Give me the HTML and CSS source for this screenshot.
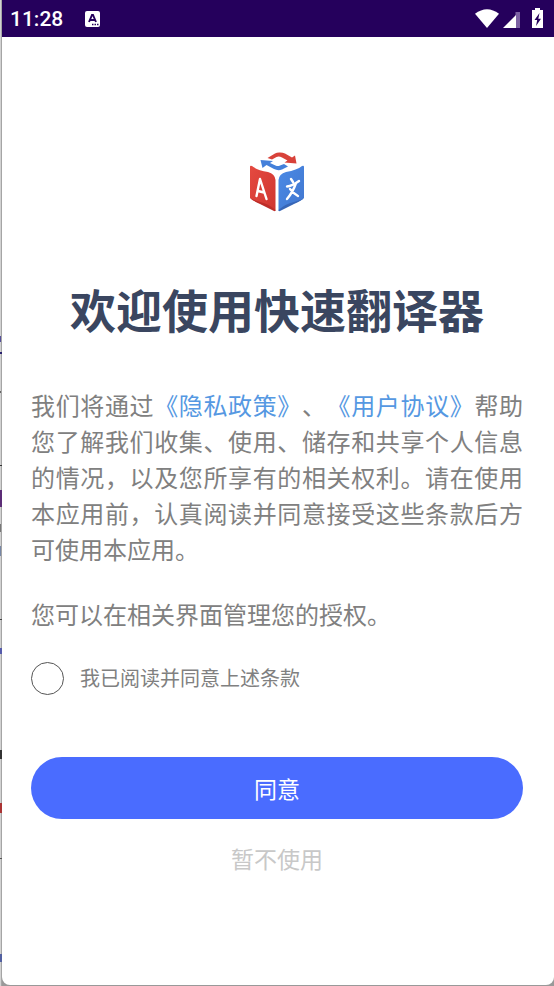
FILE: index.html
```html
<!DOCTYPE html>
<html lang="zh-CN">
<head>
<meta charset="utf-8">
<meta name="viewport" content="width=device-width, initial-scale=1">
<title>欢迎使用快速翻译器</title>
<link rel="stylesheet" href="styles.css">
</head>
<body>
<div class="screen">
  <header class="status">
    <span class="clock">11:28</span>
    <svg class="notice" width="15" height="16" viewBox="0 0 15 16" aria-hidden="true">
      <rect width="15" height="16" rx="2" fill="#fff"/>
      <path d="M4 11 7 4h1l3 7M5 9h5" fill="none" stroke="#25005c" stroke-width="1.9"/>
      <path d="M7 13.5h1.5M9.5 13.5H11M12 13.5h1.5" stroke="#25005c" stroke-width="1.3"/>
    </svg>
    <svg class="signals" width="70" height="22" viewBox="0 0 70 22" aria-hidden="true">
      <path d="M0 5.8Q12 -3.4 24 5.8L12 20Z" fill="#fff"/>
      <path d="M40.500 4H45V20H40.500Z" fill="#7c61a3"/>
      <path d="M28 20 41 7V20Z" fill="#fff"/>
      <path d="M60 0h5v2h3v18H57V2h3Z" fill="#fff"/>
      <path d="M64.500 5 59.500 12h2.700L61 18l5-7.300h-2.700Z" fill="#25005c"/>
    </svg>
  </header>
  <main class="content">
    <svg class="logo" width="62" height="64" viewBox="0 0 62 64" role="img" aria-label="快速翻译器">
      <defs>
        <linearGradient id="red" x2="1" y2="1"><stop stop-color="#e54a40"/><stop offset="1" stop-color="#cf3530"/></linearGradient>
        <linearGradient id="blue" x2="1" y2="1"><stop stop-color="#4a8ae6"/><stop offset="1" stop-color="#4277cf"/></linearGradient>
      </defs>
      <path d="M4 17Q4 15 6 16Q11 20 22 22Q29 24 29.500 30V61Q23 55 14 53Q7 51 4 48Z" fill="url(#red)"/>
      <path d="M58 17Q58 15 56 16Q51 20 40 22Q33 24 32.500 30V61Q39 55 48 53Q55 51 58 48Z" fill="url(#blue)"/>
      <path d="M4 48Q7 51 14 54L28 61Q29.500 61.500 29.500 60Q23 54 14 52Q7 50 4 48Z" fill="#bd2d29"/>
      <path d="M58 48Q55 51 48 54L34 61Q32.500 61.500 32.500 60Q39 54 48 52Q55 50 58 48Z" fill="#3766b7"/>
      <path d="M10.500 46 14 29 20.500 49M12 41 18 42.500" fill="none" stroke="#fff" stroke-width="2.400" stroke-linecap="round" stroke-linejoin="round"/>
      <path d="M45 29 47 32M41 36.500Q46 36 53 31M50 33Q47 42 41 49M44 39Q48 44 52 46" fill="none" stroke="#fff" stroke-width="2.400" stroke-linecap="round"/>
      <path d="M21.500 8 29 3.500Q31 2.300 34 2.500Q37 2.500 39 3.500L46 7.500 49 5.500 50.500 13.500 38.500 12.500 41.500 10.500 36 7.500Q33 6 30.500 7L26 9.500Z" fill="#d8423a"/>
      <path d="M42 16.500 36 19.500Q32 21 28 19L20.500 15 16.500 18 14.500 10 27 11 24 13 29.500 15.500Q32 16.500 34 15.500L38 14Z" fill="#4480da"/>
    </svg>
    <h1 class="title">欢迎使用快速翻译器</h1>
    <p class="terms">我们将通过<a href="#privacy">《隐私政策》</a>、<a href="#agreement">《用户协议》</a>帮助您了解我们收集、使用、储存和共享个人信息的情况，以及您所享有的相关权利。请在使用本应用前，认真阅读并同意接受这些条款后方可使用本应用。</p>
    <p class="terms">您可以在相关界面管理您的授权。</p>
    <label class="consent"><input type="checkbox" class="check"><span>我已阅读并同意上述条款</span></label>
    <button class="accept" type="button">同意</button>
    <button class="decline" type="button">暂不使用</button>
  </main>
</div>
</body>
</html>
```
FILE: styles.css
```css
* {
  box-sizing: border-box;
}

body {
  margin: 0;
  padding: 0 0 1px 2px;
  min-height: 100vh;
  display: flex;
  font-family: "Noto Sans CJK SC", sans-serif;
  color: #808080;
  /* sliver of the window behind the phone frame */
  background:
    linear-gradient(#55509a, #55509a) 0 336px / 1px 6px no-repeat,
    linear-gradient(#29206e, #29206e) 0 352px / 2px 2px no-repeat,
    linear-gradient(#666, #666) 0 391px / 1px 2px no-repeat,
    linear-gradient(#333, #333) 0 465px / 2px 1px no-repeat,
    linear-gradient(#5c2d77, #5c2d77) 0 490px / 2px 17px no-repeat,
    linear-gradient(#777, #777) 0 524px / 1px 8px no-repeat,
    linear-gradient(#7686a5, #7686a5) 0 546px / 1px 10px no-repeat,
    linear-gradient(#444, #444) 0 619px / 2px 1px no-repeat,
    linear-gradient(#555bab, #555bab) 0 648px / 2px 6px no-repeat,
    linear-gradient(#333, #333) 0 750px / 2px 9px no-repeat,
    linear-gradient(#a33, #a33) 0 803px / 2px 10px no-repeat,
    linear-gradient(#555, #555) 0 858px / 2px 1px no-repeat,
    linear-gradient(#5260a0, #5260a0) 0 954px / 2px 8px no-repeat,
    linear-gradient(90deg, #d2d2d2 1px, #a5a5a5 1px, #a5a5a5 2px, #999 2px);
}

.screen {
  flex: 1;
  display: flex;
  flex-direction: column;
  background: #fff;
  border-radius: 0 0 8px 8px;
}

.status {
  display: flex;
  align-items: center;
  height: 37px;
  padding: 0 9px 0 8px;
  background: #25005c;
  color: #fff;
}

.clock {
  font: 500 21px/36px Roboto, sans-serif;
}

.notice {
  margin-left: 22px;
}

.signals {
  margin-left: auto;
}

.content {
  display: flex;
  flex-direction: column;
  padding: 113px 31px 32px 29px;
}

.logo {
  align-self: center;
}

.title {
  margin: 60px 0 45px;
  font-size: 46px;
  line-height: 68px;
  font-weight: 700;
  text-align: center;
  color: #3a4660;
}

.terms {
  margin: 0 0 29px;
  font-size: 24px;
  line-height: 36px;
  font-weight: 400;
  text-align: justify;
  text-spacing-trim: space-all;
}

.terms a {
  color: #5598e2;
  text-decoration: none;
}

.consent {
  display: flex;
  align-items: center;
  gap: 16px;
  font-size: 20px;
  line-height: 34px;
}

.check {
  appearance: none;
  width: 33px;
  height: 33px;
  margin: 0;
  border: 1px solid #555;
  border-radius: 50%;
}

.check:checked {
  background: #4a6cff;
}

.accept,
.decline {
  border: 0;
  font: inherit;
  font-size: 23px;
}

.accept {
  height: 62px;
  margin-top: 62px;
  border-radius: 31px;
  background: #4a6cff;
  color: #fff;
}

.decline {
  align-self: center;
  margin-top: 19px;
  padding: 0;
  line-height: 40px;
  background: none;
  color: #c8c8c8;
}
```
